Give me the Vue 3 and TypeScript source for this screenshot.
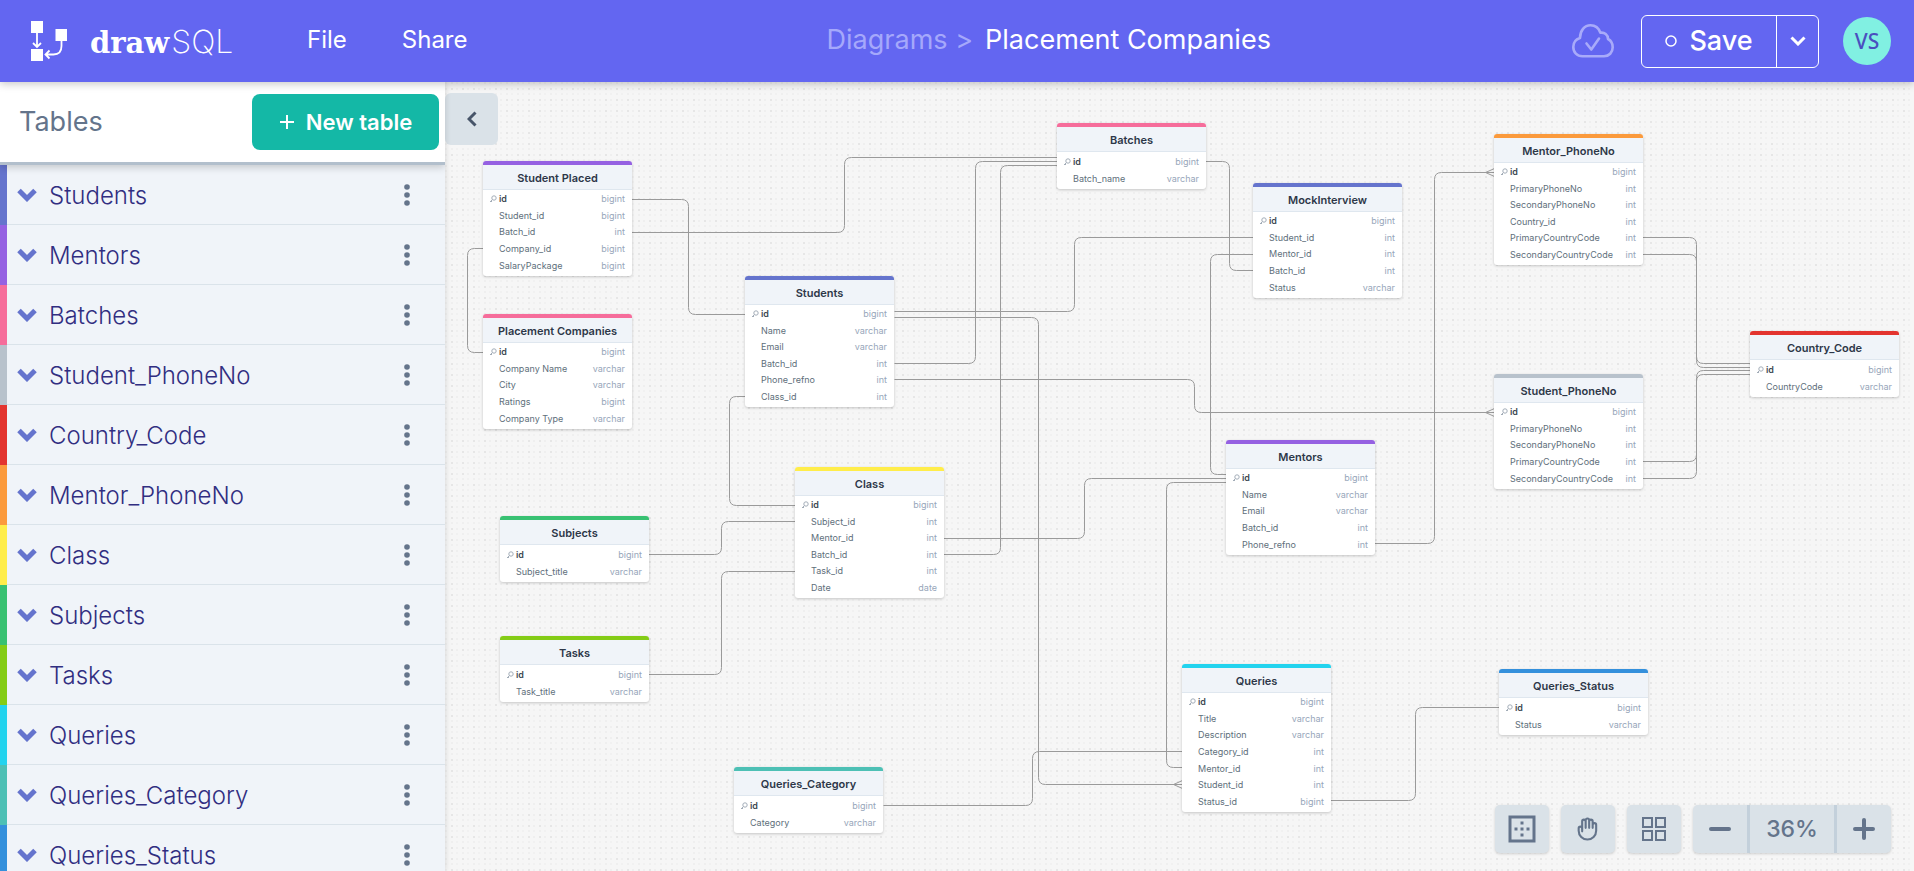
<script setup lang="ts">
import { computed, ref } from 'vue'

type Field = [name: string, type: string]

interface TableCard {
  name: string
  color: string
  x: number
  y: number
  fields: Field[]
}

interface Relation {
  from: [number, number]
  turn: number
  to: [number, number]
  many?: boolean
}

const cards: TableCard[] = [
  {
    name: 'Student Placed', color: '#9561e2', x: 483, y: 161,
    fields: [['id', 'bigint'], ['Student_id', 'bigint'], ['Batch_id', 'int'], ['Company_id', 'bigint'], ['SalaryPackage', 'bigint']],
  },
  {
    name: 'Placement Companies', color: '#f66d9b', x: 483, y: 314,
    fields: [['id', 'bigint'], ['Company Name', 'varchar'], ['City', 'varchar'], ['Ratings', 'bigint'], ['Company Type', 'varchar']],
  },
  {
    name: 'Students', color: '#6574cd', x: 745, y: 276,
    fields: [['id', 'bigint'], ['Name', 'varchar'], ['Email', 'varchar'], ['Batch_id', 'int'], ['Phone_refno', 'int'], ['Class_id', 'int']],
  },
  {
    name: 'Class', color: '#ffed4a', x: 795, y: 467,
    fields: [['id', 'bigint'], ['Subject_id', 'int'], ['Mentor_id', 'int'], ['Batch_id', 'int'], ['Task_id', 'int'], ['Date', 'date']],
  },
  { name: 'Subjects', color: '#38c172', x: 500, y: 516, fields: [['id', 'bigint'], ['Subject_title', 'varchar']] },
  { name: 'Tasks', color: '#84cc16', x: 500, y: 636, fields: [['id', 'bigint'], ['Task_title', 'varchar']] },
  { name: 'Queries_Category', color: '#4dc0b5', x: 734, y: 767, fields: [['id', 'bigint'], ['Category', 'varchar']] },
  { name: 'Batches', color: '#f66d9b', x: 1057, y: 123, fields: [['id', 'bigint'], ['Batch_name', 'varchar']] },
  {
    name: 'MockInterview', color: '#6574cd', x: 1253, y: 183,
    fields: [['id', 'bigint'], ['Student_id', 'int'], ['Mentor_id', 'int'], ['Batch_id', 'int'], ['Status', 'varchar']],
  },
  {
    name: 'Mentors', color: '#9561e2', x: 1226, y: 440,
    fields: [['id', 'bigint'], ['Name', 'varchar'], ['Email', 'varchar'], ['Batch_id', 'int'], ['Phone_refno', 'int']],
  },
  {
    name: 'Queries', color: '#22d3ee', x: 1182, y: 664,
    fields: [['id', 'bigint'], ['Title', 'varchar'], ['Description', 'varchar'], ['Category_id', 'int'], ['Mentor_id', 'int'], ['Student_id', 'int'], ['Status_id', 'bigint']],
  },
  { name: 'Queries_Status', color: '#3490dc', x: 1499, y: 669, fields: [['id', 'bigint'], ['Status', 'varchar']] },
  {
    name: 'Mentor_PhoneNo', color: '#fb9a3c', x: 1494, y: 134,
    fields: [['id', 'bigint'], ['PrimaryPhoneNo', 'int'], ['SecondaryPhoneNo', 'int'], ['Country_id', 'int'], ['PrimaryCountryCode', 'int'], ['SecondaryCountryCode', 'int']],
  },
  {
    name: 'Student_PhoneNo', color: '#b8c2cc', x: 1494, y: 374,
    fields: [['id', 'bigint'], ['PrimaryPhoneNo', 'int'], ['SecondaryPhoneNo', 'int'], ['PrimaryCountryCode', 'int'], ['SecondaryCountryCode', 'int']],
  },
  { name: 'Country_Code', color: '#e3342f', x: 1750, y: 331, fields: [['id', 'bigint'], ['CountryCode', 'varchar']] },
]

const listed = [
  'Students', 'Mentors', 'Batches', 'Student_PhoneNo', 'Country_Code', 'Mentor_PhoneNo',
  'Class', 'Subjects', 'Tasks', 'Queries', 'Queries_Category', 'Queries_Status',
]
const sideRows = computed(() =>
  listed.map((name) => ({ name, color: cards.find((c) => c.name === name)!.color })),
)

const relations: Relation[] = [
  { from: [631, 199], turn: 688, to: [746, 314] },
  { from: [631, 232], turn: 844, to: [1057, 157] },
  { from: [483, 248], turn: 467, to: [483, 352] },
  { from: [894, 363], turn: 975, to: [1057, 161] },
  { from: [943, 554], turn: 1000, to: [1057, 165] },
  { from: [1205, 161], turn: 1229, to: [1253, 270] },
  { from: [894, 311], turn: 1074, to: [1253, 237] },
  { from: [894, 317], turn: 1038, to: [1182, 784], many: true },
  { from: [894, 379], turn: 1194, to: [1494, 412], many: true },
  { from: [746, 396], turn: 729, to: [795, 505] },
  { from: [648, 554], turn: 721, to: [795, 521] },
  { from: [648, 674], turn: 721, to: [795, 571] },
  { from: [943, 538], turn: 1084, to: [1226, 478] },
  { from: [1226, 482], turn: 1166, to: [1182, 767] },
  { from: [1253, 254], turn: 1210, to: [1226, 474] },
  { from: [883, 805], turn: 1032, to: [1182, 751] },
  { from: [1374, 543], turn: 1434, to: [1494, 172], many: true },
  { from: [1330, 800], turn: 1415, to: [1499, 707] },
  { from: [1642, 237], turn: 1696, to: [1750, 363] },
  { from: [1642, 254], turn: 1696, to: [1750, 367] },
  { from: [1642, 461], turn: 1696, to: [1750, 370] },
  { from: [1642, 478], turn: 1696, to: [1750, 374] },
]

// Elbow connector with rounded corners, plus a crow's foot on "many" ends
function connector(r: Relation): string {
  const [x1, y1] = r.from
  const [x2, y2] = r.to
  const rad = 7
  const v = Math.sign(y2 - y1)
  const a = Math.sign(r.turn - x1)
  const b = Math.sign(x2 - r.turn)
  let d = `M${x1} ${y1}H${r.turn - a * rad}Q${r.turn} ${y1} ${r.turn} ${y1 + v * rad}`
  d += `V${y2 - v * rad}Q${r.turn} ${y2} ${r.turn + b * rad} ${y2}H${x2}`
  if (r.many) d += `M${x2} ${y2 - 4}L${x2 - 9} ${y2}L${x2} ${y2 + 4}`
  return d
}

const HEAD = 28
const ROW = 16.4
const place = (c: TableCard) => ({
  left: `${c.x}px`,
  top: `${c.y}px`,
  height: `${Math.round(HEAD + 5 + c.fields.length * ROW)}px`,
})

const open = ref(true)
const zoom = ref(36)
</script>

<template>
  <div class="app">
    <main class="board" aria-label="Diagram">
      <svg class="lines" aria-hidden="true">
        <g transform="translate(.5 .5)">
          <path v-for="(r, i) in relations" :key="i" :d="connector(r)" />
        </g>
      </svg>
      <section v-for="c in cards" :key="c.name" class="card" :style="place(c)">
        <h3 :style="{ borderTopColor: c.color }">{{ c.name }}</h3>
        <ul>
          <li v-for="([name, type], i) in c.fields" :key="name" :class="{ primary: i === 0 }">
            <svg v-if="i === 0" class="key" viewBox="0 0 8 8" aria-hidden="true">
              <circle cx="5" cy="3" r="2.2" />
              <path d="M3.4 4.6 1 7M2 6l1 1" />
            </svg>
            <span class="field">{{ name }}</span>
            <span class="type">{{ type }}</span>
          </li>
        </ul>
      </section>
    </main>

    <header class="bar">
      <a class="brand" href="#" aria-label="drawSQL home">
        <svg class="mark" viewBox="0 0 36 40" aria-hidden="true">
          <path class="solid" d="M0 0h12v12H0zM24.500 8H36v12H24.500zM0 28h12v12H0z" />
          <path class="wire" d="M6 12v14M2 22l4 4 4-4M30.500 20v5c0 6-3 8.500-8 8.500h-8M18.500 29.500l-4 4 4 4" />
        </svg>
        <span class="word"><b>draw</b><i>SQL</i></span>
      </a>
      <nav class="menu">
        <button type="button">File</button>
        <button type="button">Share</button>
      </nav>
      <div class="crumbs">
        <a href="#">Diagrams &gt;</a>
        <h1>Placement Companies</h1>
      </div>
      <svg class="cloud" viewBox="0 0 42 34" aria-hidden="true">
        <path d="M10.500 32.300C5 32.300 1.300 28.500 1.300 23 1.300 18.500 4 15.200 8 14 8 6.500 12.500 1.300 18.500 1.300c5 0 8.300 3 9.800 7.400C32.500 8 36 11 36 15c3 1.500 4.700 4.500 4.700 8.300 0 5.200-3.700 9-8.700 9z" />
        <path d="m14.500 19.500 4.800 6L27 14.500" />
      </svg>
      <div class="save">
        <button type="button" class="save-main">
          <svg viewBox="0 0 12 12" aria-hidden="true"><circle cx="6" cy="6" r="5" /></svg>
          Save
        </button>
        <button type="button" class="save-more" aria-label="More save options">
          <svg viewBox="0 0 16 10" aria-hidden="true"><path d="m1.500 1.500 6.500 6.500 6.500-6.500" /></svg>
        </button>
      </div>
      <button type="button" class="avatar">VS</button>
    </header>

    <aside v-show="open" class="side">
      <div class="side-head">
        <h2>Tables</h2>
        <button type="button" class="new">
          <svg viewBox="0 0 16 16" aria-hidden="true"><path d="M8 1v14M1 8h14" /></svg>
          New table
        </button>
      </div>
      <ul class="list">
        <li v-for="t in sideRows" :key="t.name" :style="{ borderLeftColor: t.color }">
          <button type="button" class="row">
            <svg viewBox="0 0 20 14" aria-hidden="true"><path d="m2 2.500 8 8 8-8" /></svg>
            {{ t.name }}
          </button>
          <button type="button" class="dots" :aria-label="`${t.name} options`">
            <svg viewBox="0 0 6 22" aria-hidden="true">
              <circle cx="3" cy="3" r="2.800" /><circle cx="3" cy="11" r="2.800" /><circle cx="3" cy="19" r="2.800" />
            </svg>
          </button>
        </li>
      </ul>
    </aside>

    <button type="button" class="collapse" aria-label="Toggle sidebar" @click="open = !open">
      <svg viewBox="0 0 10 16" aria-hidden="true"><path d="M8.500 1.500 2 8l6.500 6.500" /></svg>
    </button>

    <div class="tools">
      <button type="button" class="tool" aria-label="Fit to screen">
        <svg class="t36 fill" viewBox="0 0 24 24" aria-hidden="true">
          <path d="M9 11H7v2h2v-2zm4 4h-2v2h2v-2zm0-8h-2v2h2V7zm0 4h-2v2h2v-2zm4 0h-2v2h2v-2zM3 3v18h18V3H3zm16 16H5V5h14v14z" />
        </svg>
      </button>
      <button type="button" class="tool" aria-label="Pan">
        <svg class="t28" viewBox="0 0 24 24" aria-hidden="true">
          <path d="M7 11.500V14m0-2.500v-6a1.500 1.500 0 113 0m-3 6a1.500 1.500 0 00-3 0v2a7.500 7.500 0 0015 0v-5a1.500 1.500 0 00-3 0m-6-3V11m0-5.500v-1a1.500 1.500 0 013 0v1m0 0V11m0-5.500a1.500 1.500 0 013 0v3m0 0V11" />
        </svg>
      </button>
      <button type="button" class="tool" aria-label="Arrange tables">
        <svg class="t24" viewBox="0 0 24 24" aria-hidden="true">
          <path d="M1 1h9v9H1zM14 1h9v9h-9zM1 14h9v9H1zM14 14h9v9h-9z" />
        </svg>
      </button>
      <div class="zoom">
        <button type="button" aria-label="Zoom out" @click="zoom--">
          <svg viewBox="0 0 22 22" aria-hidden="true"><path d="M2 11h18" /></svg>
        </button>
        <output>{{ zoom }}%</output>
        <button type="button" aria-label="Zoom in" @click="zoom++">
          <svg viewBox="0 0 22 22" aria-hidden="true"><path d="M2 11h18M11 2v18" /></svg>
        </button>
      </div>
    </div>
  </div>
</template>

<style>
body {
  margin: 0;
}
</style>

<style scoped>
.app {
  position: relative;
  display: grid;
  grid-template: auto minmax(0, 1fr) / auto minmax(0, 1fr);
  height: 100vh;
  overflow: hidden;
  font-family: Inter, 'Liberation Sans', sans-serif;
  background: #f6f6f6;
}
button {
  margin: 0;
  padding: 0;
  border: 0;
  background: none;
  font: inherit;
  color: inherit;
  cursor: pointer;
}
h1, h2, h3, ul {
  margin: 0;
  padding: 0;
  font-weight: 400;
  list-style: none;
}
svg {
  display: block;
  flex: none;
  fill: none;
  stroke: currentColor;
}
a {
  color: inherit;
  text-decoration: none;
}

/* canvas */
.board {
  position: absolute;
  inset: 0;
  background-image:
    radial-gradient(circle at 1px 1px, #e6e6e6 1px, transparent 1px),
    radial-gradient(circle at 6px 1px, #efefef 1px, transparent 1px),
    radial-gradient(circle at 1px 6px, #efefef 1px, transparent 1px),
    radial-gradient(circle at 6px 6px, #f1f1f1 1px, transparent 1px);
  background-size: 11px 11px;
}
.lines {
  width: 100%;
  height: 100%;
  stroke: #9a9a9a;
}
.card {
  position: absolute;
  display: grid;
  grid-template-rows: auto minmax(0, 1fr);
  width: 149px;
  border-radius: 3px;
  background: #fff;
  box-shadow: 0 1px 3px rgba(0, 0, 0, 0.2);
}
.card h3 {
  box-sizing: border-box;
  height: 29px;
  border-top: 4px solid;
  border-bottom: 1px solid #dfe7ef;
  border-radius: 3px 3px 0 0;
  background: #f0f4f9;
  color: #2d3748;
  font-size: 11px;
  font-weight: 600;
  line-height: 27px;
  text-align: center;
  white-space: nowrap;
}
.card ul {
  display: grid;
  grid-auto-rows: minmax(0, 1fr);
  padding: 1px 7px 2px 16px;
}
.card li {
  position: relative;
  display: flex;
  align-items: center;
  justify-content: space-between;
  font-size: 9px;
  line-height: 12px;
  color: #606f7b;
}
.type {
  color: #97a6ba;
}
.primary .field {
  font-weight: 600;
  color: #3d4852;
}
.key {
  position: absolute;
  left: -10px;
  width: 8px;
  height: 8px;
  color: #a3adb8;
}

/* top bar */
.bar {
  grid-column: 1 / -1;
  z-index: 3;
  display: flex;
  align-items: center;
  height: 82px;
  box-sizing: border-box;
  padding: 0 23px 0 31px;
  background: #6366f1;
  color: #fff;
  box-shadow: 0 2px 8px rgba(0, 0, 0, 0.22);
}
.brand {
  display: flex;
  align-items: center;
  gap: 23px;
}
.mark {
  width: 36px;
  height: 40px;
}
.mark .solid {
  fill: #fff;
  stroke: none;
}
.mark .wire {
  stroke-width: 1.800;
}
.word {
  display: flex;
  align-items: baseline;
  gap: 2px;
  width: 146px;
  line-height: 36px;
}
.word b {
  font: 700 29px 'DejaVu Serif', serif;
}
.word i {
  font: 200 32px Inter, sans-serif;
}
.menu {
  display: flex;
  gap: 55px;
  margin: 0 0 3px 71px;
  font-size: 24px;
  line-height: 32px;
}
.crumbs {
  flex: 1;
  display: flex;
  justify-content: center;
  gap: 12px;
  margin: 0 0 3px 58px;
  font-size: 27px;
  line-height: 36px;
  white-space: nowrap;
}
.crumbs a {
  color: #a5a8fb;
}
.crumbs h1 {
  font-size: 27px;
}
.cloud {
  width: 42px;
  height: 34px;
  color: #a8aafa;
  stroke-width: 2.600;
  stroke-linecap: round;
  stroke-linejoin: round;
}
.save {
  display: flex;
  box-sizing: border-box;
  height: 53px;
  width: 178px;
  margin: 0 24px 0 27px;
  border: 1px solid #fff;
  border-radius: 6px;
}
.save-main {
  flex: 1;
  display: flex;
  align-items: center;
  justify-content: center;
  gap: 12px;
  font-size: 27px;
  font-weight: 500;
  line-height: 36px;
}
.save-main svg {
  width: 12px;
  height: 12px;
  stroke-width: 1.500;
}
.save-more {
  display: grid;
  place-items: center;
  width: 42px;
  border-left: 1px solid #fff;
}
.save-more svg {
  width: 16px;
  height: 10px;
  stroke-width: 3;
}
.avatar {
  width: 48px;
  height: 48px;
  border-radius: 50%;
  background: #81f0e2;
  color: #4a4fbf;
  font: 500 21px 'Noto Sans', sans-serif;
}

/* sidebar */
.side {
  grid-area: 2 / 1;
  z-index: 2;
  display: flex;
  flex-direction: column;
  width: 445px;
  min-height: 0;
  overflow: hidden;
  background: #f0f4f9;
  box-shadow: 0 0 6px rgba(0, 0, 0, 0.15);
}
.side-head {
  position: relative;
  flex: none;
  display: flex;
  align-items: center;
  justify-content: space-between;
  height: 80px;
  padding: 0 6px 0 19px;
  border-bottom: 3px solid #b2bfcc;
  background: #fff;
  box-shadow: 0 2px 8px rgba(0, 0, 0, 0.2);
}
.side-head h2 {
  color: #64748b;
  font-size: 27px;
  line-height: 36px;
}
.new {
  display: flex;
  align-items: center;
  justify-content: center;
  gap: 11px;
  width: 187px;
  height: 56px;
  border-radius: 8px;
  background: #14b8a6;
  color: #fff;
  font-size: 22px;
  font-weight: 600;
}
.new svg {
  width: 16px;
  height: 16px;
  stroke-width: 2;
}
.list li {
  display: flex;
  box-sizing: border-box;
  height: 60px;
  padding-right: 32px;
  border-left: 7px solid;
  background: linear-gradient(#dae3ea, #dae3ea) bottom / 100% 1px no-repeat;
}
.row {
  flex: 1;
  display: flex;
  align-items: center;
  gap: 12px;
  padding-left: 10px;
  color: #312e81;
  font-size: 24px;
  font-weight: 300;
  text-align: left;
}
.row svg {
  width: 20px;
  height: 14px;
  color: #6574cd;
  stroke-width: 5;
}
.dots {
  width: 12px;
}
.dots svg {
  width: 6px;
  height: 22px;
  margin: auto;
  fill: #64748b;
  stroke: none;
}
.collapse {
  grid-area: 2 / 2;
  z-index: 1;
  display: grid;
  place-items: center;
  width: 53px;
  height: 52px;
  margin-top: 11px;
  border-radius: 6px;
  background: #dae2e8;
  color: #475569;
}
.collapse svg {
  width: 10px;
  height: 16px;
  stroke-width: 3;
}

/* canvas tools */
.tools {
  position: absolute;
  right: 23px;
  bottom: 18px;
  display: flex;
  gap: 12px;
  color: #64748b;
}
.tool,
.zoom {
  display: grid;
  place-items: center;
  width: 54px;
  height: 48px;
  border-radius: 5px;
  background: #dae2e8;
  box-shadow: 0 1px 3px rgba(0, 0, 0, 0.16);
}
.t36 {
  width: 36px;
  height: 36px;
}
.fill {
  fill: currentColor;
  stroke: none;
}
.t28 {
  width: 28px;
  height: 28px;
  stroke-width: 1.800;
  stroke-linecap: round;
  stroke-linejoin: round;
}
.t24 {
  width: 24px;
  height: 24px;
  stroke-width: 2;
}
.zoom {
  grid-template-columns: 54px 1fr 54px;
  width: 198px;
}
.zoom output {
  box-sizing: border-box;
  width: 100%;
  border: solid #c3d0db;
  border-width: 0 3px;
  font-size: 23px;
  font-weight: 500;
  line-height: 48px;
  text-align: center;
}
.zoom svg {
  width: 22px;
  height: 22px;
  stroke-width: 4;
  stroke-linecap: round;
}
</style>
